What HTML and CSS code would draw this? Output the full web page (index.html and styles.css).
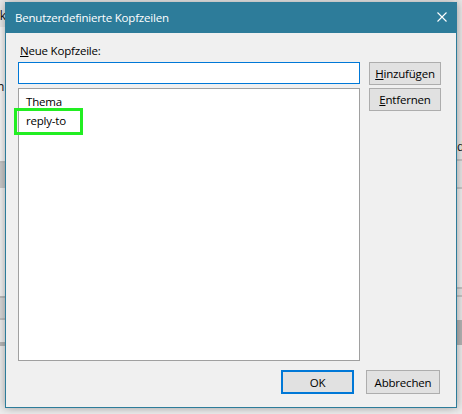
FILE: index.html
```html
<!DOCTYPE html>
<html lang="de">
<head>
    <meta charset="UTF-8">
    <meta name="viewport" content="width=device-width, initial-scale=1.0">
    <title>Benutzerdefinierte Kopfzeilen</title>
    <link rel="stylesheet" href="styles.css">
</head>
<body>
    <!-- window lying behind the dialog, only its edges show -->
    <div class="backdrop">
        <div class="edge edge-left">
            <span class="peek peek-rk">rk</span>
            <span class="peek peek-n">n</span>
        </div>
        <div class="edge edge-right">
            <span class="peek peek-d">d</span>
        </div>
    </div>

    <div class="dialog">
        <div class="titlebar">
            <span class="title">Benutzerdefinierte Kopfzeilen</span>
            <svg class="close" width="10" height="10" viewBox="0 0 10 10">
                <path d="M0.5 0.5L9.5 9.5M9.5 0.5L0.5 9.5" stroke="#fff" stroke-width="1.1" fill="none"/>
            </svg>
        </div>

        <div class="dialog-body">
            <div class="editor">
                <div class="fields">
                    <label for="header-name"><u>N</u>eue Kopfzeile:</label>
                    <input type="text" id="header-name">
                    <ul class="header-list">
                        <li>Thema</li>
                        <li class="marked">reply-to</li>
                    </ul>
                </div>
                <div class="side-buttons">
                    <button class="btn"><u>H</u>inzufügen</button>
                    <button class="btn"><u>E</u>ntfernen</button>
                </div>
            </div>

            <div class="footer">
                <button class="btn btn-default">OK</button>
                <button class="btn btn-cancel">Abbrechen</button>
            </div>
        </div>
    </div>
</body>
</html>
```

FILE: styles.css
```css
body, html {
    margin: 0;
    padding: 0;
}

body {
    position: relative;
    width: 462px;
    height: 414px;
    overflow: hidden;
    background-color: #eeeeee;
    font-family: 'Open Sans', 'Noto Sans', sans-serif;
    font-size: 11.5px;
    letter-spacing: -0.2px;
    color: #000;
}

/* Window behind */
.backdrop {
    position: absolute;
    inset: 0;
}
.edge {
    position: absolute;
    top: 0;
    width: 6px;
    height: 100%;
    overflow: hidden;
}
.edge-left {
    left: 0;
    background: linear-gradient(to bottom,
        #e9e9e9 0, #e9e9e9 27px,
        #f7f7f7 27px, #f7f7f7 161px,
        #c4c4c4 161px, #c4c4c4 163px,
        #cacaca 163px, #cacaca 188px,
        #f2f2f2 188px, #f2f2f2 296px,
        #bdbdbd 296px, #bdbdbd 298px,
        #d8d8d8 298px, #d8d8d8 318px,
        #c0c0c0 318px, #c0c0c0 320px,
        #efefef 320px, #efefef 342px,
        #b8b8b8 342px, #b8b8b8 346px,
        #ededed 346px);
}
.edge-right {
    right: 0;
    background: linear-gradient(to bottom,
        #e8e8e8 0, #e8e8e8 159px,
        #c6c6c6 159px, #c6c6c6 161px,
        #e6e6e6 161px, #e6e6e6 187px,
        #c8c8c8 187px, #c8c8c8 189px,
        #efefef 189px, #efefef 287px,
        #c4c4c4 287px, #c4c4c4 289px,
        #e4e4e4 289px, #e4e4e4 295px,
        #c4c4c4 295px, #c4c4c4 297px,
        #e9e9e9 297px, #e9e9e9 320px,
        #b3b3b3 320px, #b3b3b3 345px,
        #ececec 345px);
}
.peek {
    position: absolute;
    font-size: 12px;
    line-height: 14px;
    color: #111;
}
.peek-rk { top: 9px; left: -5px; }
.peek-n { top: 80px; left: -3px; }
.peek-d { top: 140px; left: 1px; }

/* Dialog window */
.dialog {
    position: absolute;
    left: 5px;
    top: 2px;
    width: 450px;
    height: 404px;
    border: 1px solid #2d7c9a;
    background-color: #f0f0f0;
    box-shadow: 0 0 9px rgba(0, 0, 0, 0.35);
    display: flex;
    flex-direction: column;
}

.titlebar {
    height: 30px;
    flex-shrink: 0;
    background-color: #2d7c9a;
    color: #fff;
    display: flex;
    align-items: center;
    justify-content: space-between;
    padding: 0 9px 0 9px;
}
.title {
    line-height: 16px;
    margin-top: -1px;
}
.close {
    display: block;
    margin-top: -2px;
}

.dialog-body {
    padding: 10px 16px 0 12px;
}

.editor {
    display: flex;
}
.fields {
    width: 342px;
}
.fields label {
    display: block;
    line-height: 16px;
    margin: 0 0 3px 2px;
}
.fields input {
    display: block;
    box-sizing: border-box;
    width: 342px;
    height: 22px;
    margin: 0;
    border: 1px solid #0078d7;
    background: #fff;
    outline: none;
}

.header-list {
    box-sizing: border-box;
    height: 273px;
    margin: 4px 0 0 0;
    padding: 3px 0 0 0;
    list-style: none;
    background: #fff;
    border: 1px solid #a0a0a0;
}
.header-list li {
    position: relative;
    padding-left: 7px;
    line-height: 19px;
}
/* highlight frame round an entry */
.header-list li.marked::after {
    content: "";
    position: absolute;
    left: -5px;
    top: -3px;
    width: 69px;
    height: 27px;
    box-sizing: border-box;
    border: 3px solid #22ee22;
}

.side-buttons {
    display: flex;
    flex-direction: column;
    gap: 3px;
    margin-left: 9px;
    padding-top: 19px;
}

.btn {
    box-sizing: border-box;
    width: 72px;
    height: 23px;
    padding: 0;
    font-family: inherit;
    font-size: inherit;
    letter-spacing: inherit;
    color: #000;
    background-color: #e1e1e1;
    border: 1px solid #adadad;
}

.footer {
    display: flex;
    justify-content: flex-end;
    gap: 12px;
    margin-top: 9px;
}
.footer .btn {
    height: 24px;
}
.btn-default {
    width: 73px;
    border: 2px solid #0078d7;
}
.btn-cancel {
    width: 74px;
}
```
